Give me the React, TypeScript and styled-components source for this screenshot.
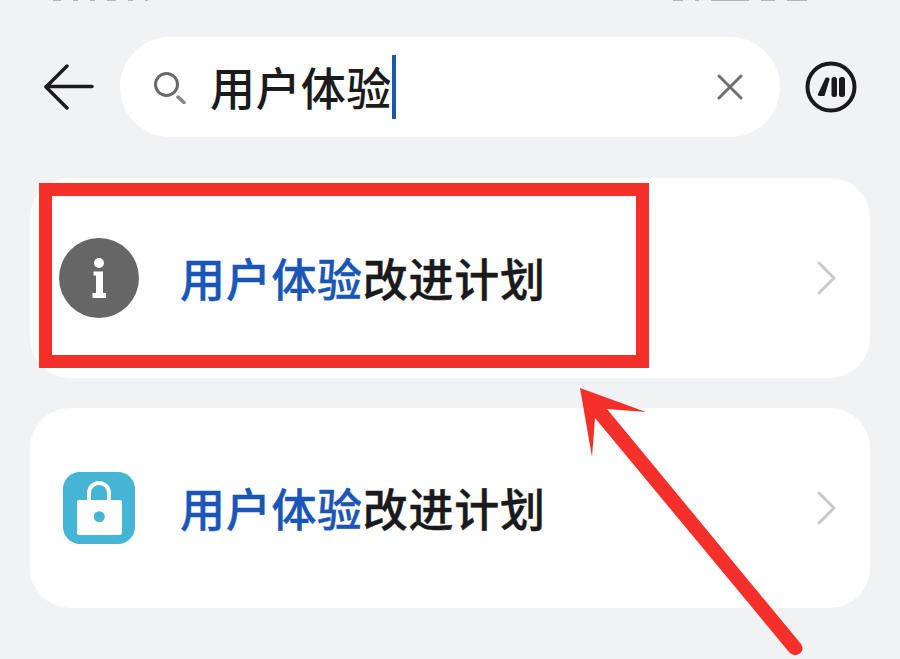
import styled, { createGlobalStyle } from "styled-components";

const GlobalStyle = createGlobalStyle`
    html, body {
        margin: 0;
        padding: 0;
        background-color: #f1f2f4;
    }
    body {
        font-family: "Noto Sans CJK SC", "Liberation Sans", sans-serif;
    }
`;

const Page = styled.div`
    position: relative;
    width: 900px;
    height: 659px;
    overflow: hidden;
    background-color: #f1f2f4;
`;

// only the bottom edge of the status bar is left in the crop, so it is drawn as specks
const StatusStrip = styled.div`
    display: flex;
    justify-content: space-between;
    height: 3px;
    padding: 0 93px 0 53px;
`;

const StatusGroup = styled.div`
    display: flex;
    gap: 12px;
`;

const StatusSpeck = styled.span<{ $width: number }>`
    width: ${(p) => p.$width}px;
    height: 1px;
    background-color: #b4b5b8;
`;

const Toolbar = styled.div`
    display: flex;
    align-items: center;
    height: 100px;
    margin-top: 34px;
    padding-left: 44px;
`;

const IconButton = styled.button`
    display: flex;
    padding: 0;
    border: 0;
    background: none;
`;

const SearchBar = styled.div`
    display: flex;
    align-items: center;
    flex: none;
    width: 660px;
    height: 100px;
    margin-left: 26px;
    padding: 0 37px 0 33px;
    box-sizing: border-box;
    border-radius: 50px;
    background-color: #fff;
`;

const Query = styled.div`
    display: flex;
    align-items: center;
    flex: 1;
    margin-left: 24px;
    font-size: 45px;
    font-weight: 500;
    line-height: 64px;
    letter-spacing: 0.4px;
    color: #1b1b1d;
`;

const Caret = styled.span`
    width: 4px;
    height: 64px;
    background-color: #2058a8;
`;

const AiButton = styled(IconButton)`
    margin-left: 25px;
`;

const List = styled.div`
    display: flex;
    flex-direction: column;
    gap: 30px;
    margin-top: 41px;
    padding: 0 30px;
`;

const Card = styled.div`
    display: flex;
    align-items: center;
    height: 200px;
    padding: 0 34px 0 29px;
    border-radius: 40px;
    background-color: #fff;
`;

const IconSlot = styled.div`
    display: flex;
    justify-content: center;
    flex: none;
    width: 80px;
`;

const Title = styled.div`
    flex: 1;
    margin-left: 41px;
    font-size: 45px;
    font-weight: 500;
    line-height: 64px;
    letter-spacing: 0.7px;
    -webkit-text-stroke: 0.4px currentColor;
    color: #1a1a1c;
`;

const Match = styled.span`
    color: #1a55b8;
`;

const Highlight = styled.div`
    position: absolute;
    top: 183px;
    left: 39px;
    width: 610px;
    height: 185px;
    box-sizing: border-box;
    border: 13px solid #f5302a;
    background: none;
`;

const Pointer = styled.svg`
    position: absolute;
    top: 0;
    left: 0;
`;

const Chevron = () => (
    <svg width="20" height="36" viewBox="0 0 20 36" fill="none">
        <path
            d="M3 3l15 15L3 33"
            stroke="#c9cacc"
            strokeWidth="3"
            strokeLinecap="round"
            strokeLinejoin="round"
        />
    </svg>
);

const InfoIcon = () => (
    <svg width="80" height="80" viewBox="0 0 80 80">
        <circle cx="40" cy="40" r="40" fill="#666" />
        <circle cx="40" cy="25" r="5" fill="#fff" />
        <path
            d="M34.500 33.500h9.500V55h3v5H33.500v-5h3.500V37.500h-2.500z"
            fill="#fff"
        />
    </svg>
);

const LockIcon = () => (
    <svg width="72" height="72" viewBox="0 0 72 72">
        <rect width="72" height="72" rx="17" fill="#45b5d6" />
        <path
            d="M26 30V21a10 10 0 0 1 20 0v9"
            fill="none"
            stroke="#fff"
            strokeWidth="4"
        />
        <rect x="14" y="28" width="45" height="35" rx="2" fill="#fff" />
        <circle cx="36.300" cy="44.700" r="5.500" fill="#45b5d6" />
    </svg>
);

const entries = [
    { id: "info", icon: <InfoIcon /> },
    { id: "lock", icon: <LockIcon /> },
];

const leftSpecks = [8, 5, 5, 9, 5, 3];
const rightSpecks = [10, 4, 38, 14, 20];

const App = () => {
    return (
        <Page>
            <GlobalStyle />
            <StatusStrip>
                <StatusGroup>
                    {leftSpecks.map((width, index) => (
                        <StatusSpeck $width={width} key={index} />
                    ))}
                </StatusGroup>
                <StatusGroup>
                    {rightSpecks.map((width, index) => (
                        <StatusSpeck $width={width} key={index} />
                    ))}
                </StatusGroup>
            </StatusStrip>
            <Toolbar>
                <IconButton>
                    <svg width="50" height="46" viewBox="0 0 50 46" fill="none">
                        <path
                            d="M48 22.500H2M23 2L2 23l21 21"
                            stroke="#1c1c1e"
                            strokeWidth="3.500"
                            strokeLinecap="round"
                            strokeLinejoin="round"
                        />
                    </svg>
                </IconButton>
                <SearchBar>
                    <svg width="33" height="33" viewBox="0 0 33 33" fill="none">
                        <circle cx="13.500" cy="13.500" r="11" stroke="#68696b" strokeWidth="3" />
                        <path
                            d="M25 26l6 5.500"
                            stroke="#858688"
                            strokeWidth="3.500"
                            strokeLinecap="round"
                        />
                    </svg>
                    <Query>
                        用户体验
                        <Caret />
                    </Query>
                    <svg width="26" height="26" viewBox="0 0 26 26" fill="none">
                        <path
                            d="M2 2l22 22M24 2L2 24"
                            stroke="#6f7072"
                            strokeWidth="3"
                            strokeLinecap="round"
                        />
                    </svg>
                </SearchBar>
                <AiButton>
                    <svg width="52" height="52" viewBox="0 0 52 52" fill="none">
                        <circle cx="26" cy="26" r="23.500" stroke="#1a1a1c" strokeWidth="4" />
                        <path d="M13 33l7-15c1-2 4.500-2 4.500 0.500L19.500 35H15c-2 0-2.500-1-2-2z" fill="#1a1a1c" />
                        <rect x="26.500" y="16" width="5.500" height="20" rx="2.500" fill="#1a1a1c" />
                        <rect x="34" y="16" width="6" height="20" rx="2.500" fill="#1a1a1c" />
                    </svg>
                </AiButton>
            </Toolbar>
            <List>
                {entries.map((entry) => (
                    <Card key={entry.id}>
                        <IconSlot>{entry.icon}</IconSlot>
                        <Title>
                            <Match>用户体验</Match>改进计划
                        </Title>
                        <Chevron />
                    </Card>
                ))}
            </List>
            <Highlight />
            <Pointer width="900" height="659" viewBox="0 0 900 659">
                <path
                    d="M580 388L646 412L607 409L801 644Q805 650 799 654Q793 657 789 652L595 418L592 457Z"
                    fill="#f5302a"
                />
            </Pointer>
        </Page>
    );
};

export default App;
